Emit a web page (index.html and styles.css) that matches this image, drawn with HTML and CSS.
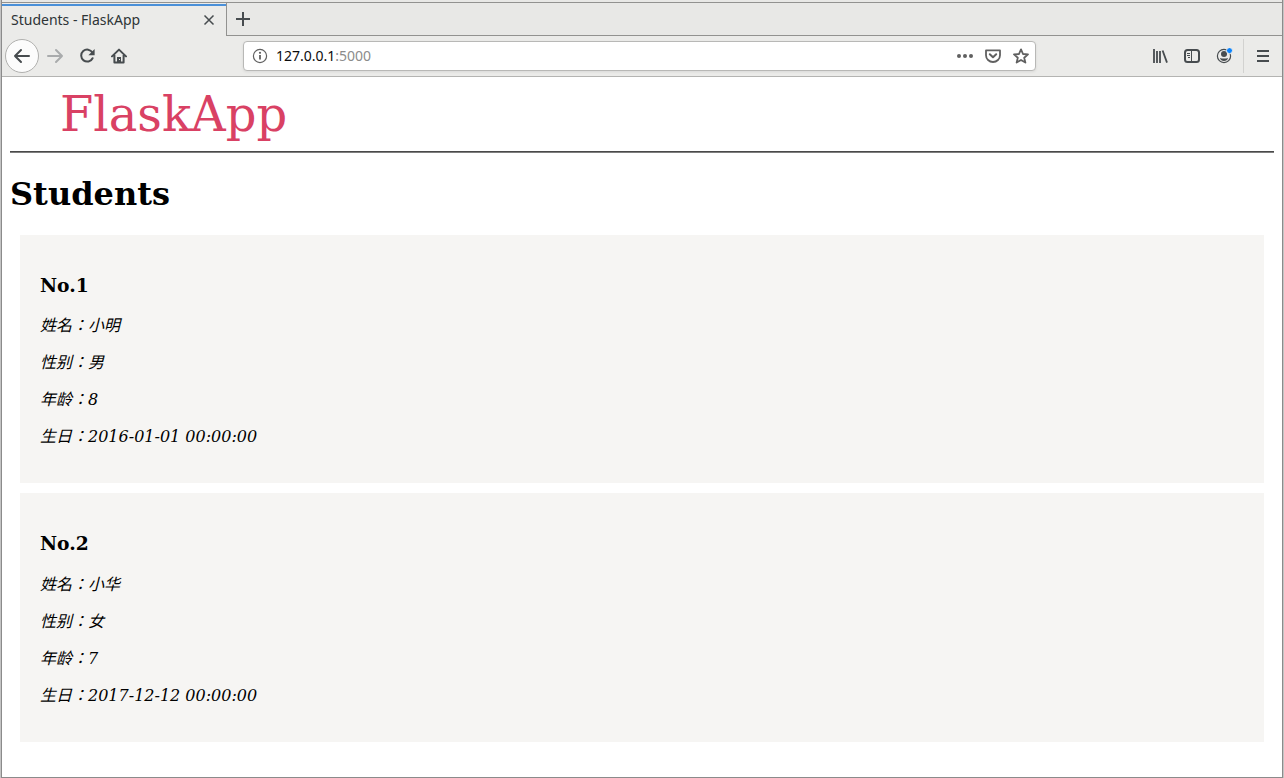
FILE: index.html
```html
<!DOCTYPE html>
<html lang="en">
<head>
    <meta charset="UTF-8">
    <title>Students - FlaskApp</title>
    <link rel="stylesheet" href="styles.css">
</head>
<body>
<div class="window">
    <div class="tabs">
        <div class="tab">
            <span class="tabTitle">Students - FlaskApp</span>
            <button class="close" aria-label="Close tab">
                <svg width="16" height="16" viewBox="0 0 16 16"><path d="M3.5 3.5l9 9M12.5 3.5l-9 9" stroke-width="1.5"/></svg>
            </button>
        </div>
        <div class="tabRest">
            <button class="newTab" aria-label="New tab">
                <svg width="16" height="16" viewBox="0 0 16 16"><path d="M8 1v14M1 8h14"/></svg>
            </button>
        </div>
    </div>
    <div class="toolbar">
        <button class="back" aria-label="Back">
            <svg width="18" height="16" viewBox="0 0 18 16"><path d="M16 8H2M8 2L2 8l6 6" stroke-linecap="round" stroke-linejoin="round"/></svg>
        </button>
        <button class="tool forward" aria-label="Forward" disabled>
            <svg width="18" height="16" viewBox="0 0 18 16"><path d="M2 8h14M10 2l6 6-6 6" stroke-linecap="round" stroke-linejoin="round"/></svg>
        </button>
        <button class="tool" aria-label="Reload">
            <svg width="16" height="16" viewBox="0 0 16 16"><path d="M13.4 4.6A6 6 0 1 0 13.6 10.2" stroke-linecap="round"/><path class="fill" d="M15.6 1v6.2H9.4z"/></svg>
        </button>
        <button class="tool" aria-label="Home">
            <svg width="16" height="16" viewBox="0 0 16 16"><path d="M1 8.4L8 1.6l7 6.8M3.4 7v7.6h9.2V7" stroke-linecap="round" stroke-linejoin="round"/><path class="fill" d="M6 9h4v5.5H6z"/><path d="M8.5 11v1" stroke="#ededeb" stroke-width="1"/></svg>
        </button>
        <div class="spacer"></div>
        <div class="urlbar">
            <svg width="16" height="16" viewBox="0 0 16 16"><circle cx="8" cy="8" r="6.6" stroke-width="1.2"/><path d="M8 7v4.5" stroke-width="1.8"/><circle class="fill" cx="8" cy="4.8" r="1.1"/></svg>
            <a class="address" href="#">127.0.0.1<span class="port">:5000</span></a>
            <button aria-label="Page actions">
                <svg width="16" height="16" viewBox="0 0 16 16"><g class="fill"><circle cx="2" cy="8" r="2"/><circle cx="8" cy="8" r="2"/><circle cx="14" cy="8" r="2"/></g></svg>
            </button>
            <button aria-label="Save to Pocket">
                <svg width="16" height="16" viewBox="0 0 16 16"><path d="M1 2.4h14v4.8a7 6.8 0 0 1-14 0z" stroke-width="1.8" stroke-linejoin="round"/><path d="M4.8 6.2L8 9.2l3.2-3" stroke-linecap="round" stroke-linejoin="round"/></svg>
            </button>
            <button aria-label="Bookmark">
                <svg width="16" height="16" viewBox="0 0 16 16"><path d="M8 1.4l2 4.6 5 .4-3.8 3.3 1.2 4.9L8 12l-4.4 2.6 1.2-4.9L1 6.4l5-.4z" stroke-width="1.8" stroke-linejoin="round"/></svg>
            </button>
        </div>
        <div class="spacer"></div>
        <button class="tool" aria-label="Library">
            <svg width="16" height="16" viewBox="0 0 16 16"><path d="M2 1v14M5 3v12M8 3v12M10.6 2.5L15 14.6" stroke-width="1.8"/></svg>
        </button>
        <button class="tool" aria-label="Sidebars">
            <svg width="16" height="16" viewBox="0 0 16 16"><rect x="1" y="2" width="14" height="12" rx="2.5"/><path d="M7.5 2v12M3 5.5h3M3 7.5h3M4 9.5h2" stroke-width="1"/></svg>
        </button>
        <button class="tool" aria-label="Account">
            <svg width="18" height="16" viewBox="0 0 18 16"><circle cx="9" cy="8" r="6.6" stroke-width="1.2"/><circle class="fill" cx="9" cy="6" r="3"/><path class="fill" d="M5 10c2 .8 6 .8 8 0-.3 1.900-2 3-4 3s-3.700-1.100-4-3z"/><circle cx="14.500" cy="2.600" r="3" fill="#0a84ff" stroke="#ebebe9" stroke-width="1"/></svg>
        </button>
        <button class="menu" aria-label="Open menu">
            <svg width="14" height="14" viewBox="0 0 14 14"><path d="M1 2h12M1 7h12M1 12h12"/></svg>
        </button>
    </div>
    <div class="page">
        <header>
            <a class="logo" href="#">FlaskApp</a>
        </header>
        <hr>
        <h1>Students</h1>
        <div class="student">
            <h3>No.1</h3>
            <p>姓名：小明</p>
            <p>性别：男</p>
            <p>年龄：8</p>
            <p>生日：2016-01-01 00:00:00</p>
        </div>
        <div class="student">
            <h3>No.2</h3>
            <p>姓名：小华</p>
            <p>性别：女</p>
            <p>年龄：7</p>
            <p>生日：2017-12-12 00:00:00</p>
        </div>
    </div>
</div>
</body>
</html>
```
FILE: styles.css
```css
*{
    box-sizing: border-box;
}
body{
    margin: 0;
    background-color: #c4c4c4;
}
.window{
    min-height: 100vh;
    display: flex;
    flex-direction: column;
    margin: 0 1px;
    border: 1px solid #8b8b8b;
    border-top: 0;
    background-color: #fff;
}
button{
    display: flex;
    align-items: center;
    justify-content: center;
    padding: 0;
    border: 0;
    background: none;
    color: #474c4f;
}
svg{
    flex: none;
    fill: none;
    stroke: currentColor;
    stroke-width: 2;
}
svg .fill{
    fill: currentColor;
    stroke: none;
}

/* tab strip */
.tabs{
    display: flex;
    height: 36px;
    padding-top: 2px;
    background-color: #e8e8e6;
    font: 14px/20px "Noto Sans", "Open Sans", sans-serif;
}
.tab{
    display: flex;
    align-items: center;
    justify-content: space-between;
    width: 225px;
    padding: 0 9px;
    border-top: 1px solid #929290;
    background: linear-gradient(#4a90d9, #4a90d9) 0 1px / 100% 2px no-repeat #ebebe9;
    border-right: 1px solid #929290;
    color: #2e3436;
}
.tabRest{
    flex: 1;
    display: flex;
    align-items: center;
    padding-left: 8px;
    border-top: 1px solid #929290;
    border-bottom: 1px solid #929290;
}

/* navigation bar */
.toolbar{
    display: flex;
    align-items: center;
    height: 41px;
    padding-left: 3px;
    border-bottom: 1px solid #b4b4b2;
    background-color: #ebebe9;
}
.back{
    width: 34px;
    height: 34px;
    border: 1px solid #b0b0ae;
    border-radius: 50%;
    background-color: #fcfcfc;
}
.tool{
    width: 32px;
    height: 32px;
}
.forward{
    color: #a9abac;
}
.spacer{
    flex: 5;
}
.urlbar{
    flex: 36;
    display: flex;
    align-items: center;
    gap: 12px;
    height: 30px;
    padding: 0 6px 0 8px;
    border: 1px solid #b8b8b6;
    border-radius: 4px;
    background-color: #fff;
    box-shadow: 0 1px 3px rgba(0,0,0,.08);
    color: #606060;
}
.urlbar button{
    color: #606060;
}
.address{
    flex: 1;
    margin-left: -4px;
    font: 14px/20px "Noto Sans", "Open Sans", sans-serif;
    color: #0c0c0d;
    text-decoration: none;
}
.port{
    color: #8c8c8c;
}
.menu{
    width: 39px;
    height: 34px;
    margin-left: 3px;
    border-left: 1px solid #d2d2d0;
}

/* page */
.page{
    flex: 1;
    padding: 8px;
    font: 16px/21px "DejaVu Serif", "Noto Sans CJK TC", serif;
    color: #000;
}
header{
    padding-left: 50px;
}
.logo{
    display: block;
    font-size: 48px;
    line-height: 58px;
    color: #d94164;
    text-decoration: none;
}
hr{
    height: 2px;
    margin: 8px 0;
    border: 0;
    border-top: 1px solid #4a4a4a;
    background-color: #7e7e7e;
}
h1{
    margin: 21px 0;
    font-size: 32px;
    line-height: 40px;
}
.student{
    margin: 10px;
    padding: 20px;
    background-color: #f6f5f3;
}
.student h3{
    margin: 1em 0;
    line-height: 23px;
}
.student p{
    margin: 16px 0;
    font-style: italic;
}
```
